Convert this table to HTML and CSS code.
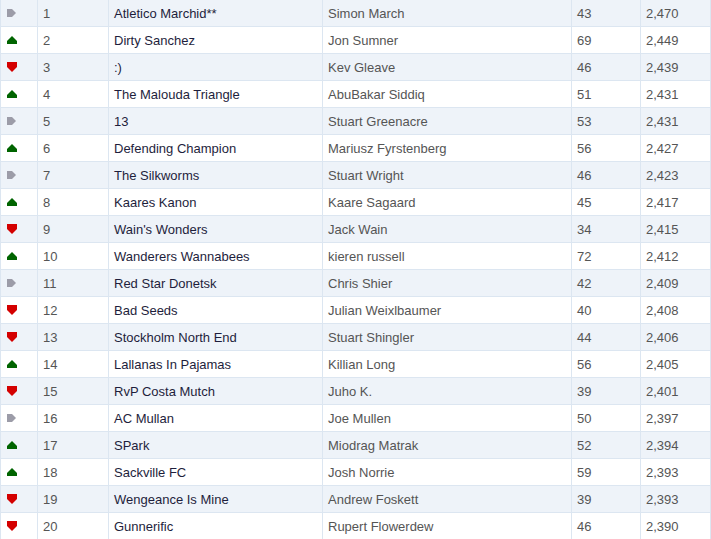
FILE: index.html
```html
<!DOCTYPE html>
<html>
<head>
<meta charset="utf-8">
<link rel="stylesheet" href="styles.css">
</head>
<body>
<svg class="defs" width="0" height="0">
  <symbol id="i-same" viewBox="0 0 10 10"><polygon points="0,1 5,1 9,5 5,9 0,9" fill="#9c9ca8"/></symbol>
  <symbol id="i-up" viewBox="0 0 10 10"><polygon points="5,1 10,6 10,9 0,9 0,6" fill="#006400"/></symbol>
  <symbol id="i-down" viewBox="0 0 10 10"><polygon points="0,0 10,0 10,5 5,10 0,5" fill="#d40000"/></symbol>
</svg>
<div class="table" id="t"></div>
<script>
var data = [
["same","1","Atletico Marchid**","Simon March","43","2,470"],
["up","2","Dirty Sanchez","Jon Sumner","69","2,449"],
["down","3",":)","Kev Gleave","46","2,439"],
["up","4","The Malouda Triangle","AbuBakar Siddiq","51","2,431"],
["same","5","13","Stuart Greenacre","53","2,431"],
["up","6","Defending Champion","Mariusz Fyrstenberg","56","2,427"],
["same","7","The Silkworms","Stuart Wright","46","2,423"],
["up","8","Kaares Kanon","Kaare Sagaard","45","2,417"],
["down","9","Wain's Wonders","Jack Wain","34","2,415"],
["up","10","Wanderers Wannabees","kieren russell","72","2,412"],
["same","11","Red Star Donetsk","Chris Shier","42","2,409"],
["down","12","Bad Seeds","Julian Weixlbaumer","40","2,408"],
["down","13","Stockholm North End","Stuart Shingler","44","2,406"],
["up","14","Lallanas In Pajamas","Killian Long","56","2,405"],
["down","15","RvP Costa Mutch","Juho K.","39","2,401"],
["same","16","AC Mullan","Joe Mullen","50","2,397"],
["up","17","SPark","Miodrag Matrak","52","2,394"],
["up","18","Sackville FC","Josh Norrie","59","2,393"],
["down","19","Wengeance Is Mine","Andrew Foskett","39","2,393"],
["down","20","Gunnerific","Rupert Flowerdew","46","2,390"]
];
var t = document.getElementById("t");
var html = "";
data.forEach(function(r){
  html += '<div class="row">' +
    '<div class="cell icon"><svg class="mv mv-' + r[0] + '" width="10" height="10"><use href="#i-' + r[0] + '"/></svg></div>' +
    '<div class="cell">' + r[1] + '</div>' +
    '<div class="cell team">' + r[2] + '</div>' +
    '<div class="cell">' + r[3] + '</div>' +
    '<div class="cell">' + r[4] + '</div>' +
    '<div class="cell last">' + r[5] + '</div>' +
    '</div>';
});
t.innerHTML = html;
</script>
</body>
</html>
```

FILE: styles.css
```css
html, body {
  margin: 0;
  padding: 0;
  background: #ffffff;
}
.defs {
  position: absolute;
  width: 0;
  height: 0;
}
.table {
  width: 711px;
  font-family: "Liberation Sans", Arial, sans-serif;
  font-size: 13px;
  color: #555555;
}
.row {
  display: grid;
  grid-template-columns: 37px 71px 214px 249px 69px 71px;
  height: 26px;
  border-bottom: 1px solid #dce6f1;
  background: #ffffff;
}
.row:nth-child(odd) {
  background: #eef3f9;
}
.cell {
  border-left: 1px solid #dce6f1;
  padding-left: 5px;
  padding-top: 1px;
  display: flex;
  align-items: center;
  white-space: nowrap;
  overflow: hidden;
  line-height: 25px;
}
.cell.last {
  border-right: 1px solid #dce6f1;
}
.cell.team {
  color: #1e1e3c;
}
.cell.icon {
  padding-left: 6px;
  padding-top: 0;
}
.mv {
  display: block;
}
```
